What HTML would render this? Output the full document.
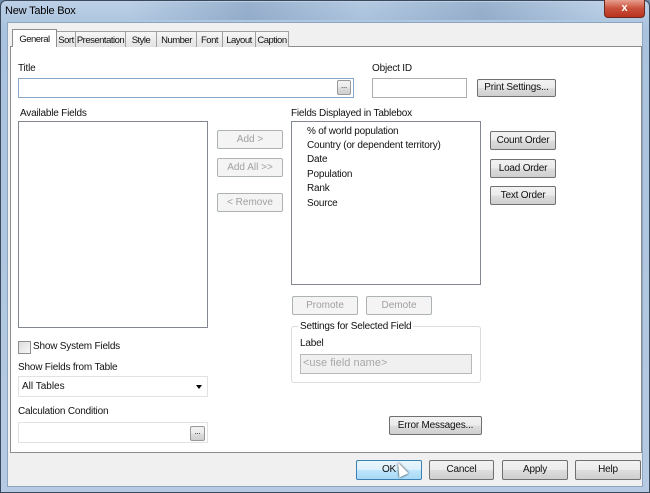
<!DOCTYPE html><html><head><style>
*{box-sizing:border-box;margin:0;padding:0}
body{width:650px;height:493px;overflow:hidden;background:#6f8aa8;font-family:"Liberation Sans",sans-serif;font-size:10px;color:#111;position:relative}
div,span{position:absolute}
.t{white-space:nowrap;letter-spacing:-0.2px}
.in{background:#fff;border:1px solid #abadb3}
.b{border:1px solid #707070;border-radius:2px;background:linear-gradient(#f2f2f2,#ebebeb 50%,#dddddd 51%,#cfcfcf);text-align:center;white-space:nowrap;letter-spacing:-0.2px}
.d{border:1px solid #adb2b5;border-radius:2px;background:#f4f4f4;color:#a0a0a0;text-align:center;white-space:nowrap}
.tab{top:31px;height:16px;border:1px solid #a0a0a0;border-bottom:none;background:linear-gradient(#f6f6f6,#e3e3e3);padding:3px 0 0 0;text-align:center;white-space:nowrap;letter-spacing:-0.5px;font-size:9.5px;overflow:hidden}
</style></head><body>
<div style="left:0;top:0;width:650px;height:493px;background:linear-gradient(#bcd0e6,#a9c2dd 30px,#b6cbe3);border:1px solid #3a4a5c;border-radius:6px 6px 0 0"></div>
<div style="left:130px;top:2px;width:470px;height:18px;background:linear-gradient(90deg,rgba(120,150,190,.0),rgba(90,120,160,.35),rgba(120,150,190,.1),rgba(80,110,150,.3),rgba(120,150,190,.0))"></div>
<div class="t" style="left:5px;top:5px;font-size:11px;color:#000">New Table Box</div>
<div style="left:604px;top:0;width:41px;height:18px;background:linear-gradient(#e8a090,#c9503a 50%,#b8321e);border:1px solid #6b2a20;border-top:none;border-radius:0 0 4px 4px;color:#fff;text-align:center;font-weight:bold;font-size:11px;line-height:16px">x</div>
<div style="left:7px;top:22px;width:636px;height:465px;background:#f0f0f0;border:1px solid #8ea5c0"></div>
<div style="left:10px;top:46px;width:632px;height:407px;background:#fff;border:1px solid #8d8d8d"></div>
<div class="tab" style="left:12px;top:29px;width:45px;height:18px;background:#fff;z-index:2;border-color:#8d8d8d;padding-top:4px">General</div>
<div class="tab" style="left:57px;width:19px;border-left:none">Sort</div>
<div class="tab" style="left:75px;width:51px">Presentation</div>
<div class="tab" style="left:126px;width:31px;border-left:none">Style</div>
<div class="tab" style="left:157px;width:40px;border-left:none">Number</div>
<div class="tab" style="left:197px;width:26px;border-left:none">Font</div>
<div class="tab" style="left:223px;width:33px;border-left:none">Layout</div>
<div class="tab" style="left:255px;width:34px">Caption</div>

<div class="t" style="left:18px;top:63px">Title</div>
<div class="in" style="left:18px;top:78px;width:336px;height:20px;border-color:#8aa7c9"></div>
<div class="b" style="left:337px;top:80px;width:14px;height:15px;font-size:8px;line-height:10px;border-color:#999">...</div>
<div class="t" style="left:372px;top:63px">Object ID</div>
<div class="in" style="left:372px;top:78px;width:95px;height:20px"></div>
<div class="b" style="left:477px;top:79px;width:79px;height:18px;line-height:16px">Print Settings...</div>

<div class="t" style="left:20px;top:108px">Available Fields</div>
<div class="in" style="left:18px;top:121px;width:190px;height:207px;border-color:#828790"></div>
<div class="d" style="left:217px;top:130px;width:66px;height:19px;line-height:17px">Add &gt;</div>
<div class="d" style="left:217px;top:158px;width:66px;height:19px;line-height:17px">Add All &gt;&gt;</div>
<div class="d" style="left:217px;top:193px;width:66px;height:19px;line-height:17px">&lt; Remove</div>

<div class="t" style="left:291px;top:108px">Fields Displayed in Tablebox</div>
<div class="in" style="left:291px;top:121px;width:190px;height:164px;border-color:#828790"></div>
<div class="t" style="left:307px;top:126px">% of world population</div>
<div class="t" style="left:307px;top:140px">Country (or dependent territory)</div>
<div class="t" style="left:307px;top:154px">Date</div>
<div class="t" style="left:307px;top:169px">Population</div>
<div class="t" style="left:307px;top:183px">Rank</div>
<div class="t" style="left:307px;top:198px">Source</div>
<div class="b" style="left:490px;top:131px;width:66px;height:19px;line-height:17px">Count Order</div>
<div class="b" style="left:490px;top:159px;width:66px;height:19px;line-height:17px">Load Order</div>
<div class="b" style="left:490px;top:186px;width:66px;height:19px;line-height:17px">Text Order</div>

<div class="d" style="left:292px;top:296px;width:66px;height:19px;line-height:17px">Promote</div>
<div class="d" style="left:366px;top:296px;width:66px;height:19px;line-height:17px">Demote</div>
<div style="left:291px;top:326px;width:190px;height:57px;border:1px solid #dcdcdc;border-radius:3px"></div>
<div class="t" style="left:298px;top:321px;background:#fff;padding:0 2px">Settings for Selected Field</div>
<div class="t" style="left:300px;top:338px">Label</div>
<div class="in" style="left:300px;top:354px;width:172px;height:20px;background:#f0f0f0;border-color:#b8b8b8;color:#a8a8a8;padding:2px 0 0 2px;font-size:11px">&lt;use field name&gt;</div>

<div style="left:18px;top:341px;width:13px;height:13px;border:1px solid #8f8f8f;background:linear-gradient(135deg,#dcdcdc,#f8f8f8)"></div>
<div class="t" style="left:33px;top:341px">Show System Fields</div>
<div class="t" style="left:18px;top:362px">Show Fields from Table</div>
<div class="in" style="left:18px;top:376px;width:190px;height:21px;border-color:#e2e2e2;padding:4px 0 0 3px">All Tables</div>
<div style="left:196px;top:385px;width:0;height:0;border-left:3px solid transparent;border-right:3px solid transparent;border-top:4px solid #000"></div>
<div class="t" style="left:18px;top:406px">Calculation Condition</div>
<div class="in" style="left:18px;top:422px;width:190px;height:21px;border-color:#e2e2e2"></div>
<div class="b" style="left:190px;top:426px;width:15px;height:15px;font-size:8px;line-height:10px;border-color:#999">...</div>

<div class="b" style="left:389px;top:416px;width:93px;height:19px;line-height:17px">Error Messages...</div>

<div class="b" style="left:356px;top:460px;width:66px;height:20px;line-height:18px;border-color:#3c7fb1;background:linear-gradient(#eaf6fd,#d9f0fc 50%,#bee6fd 51%,#a7d9f5)">OK</div>
<div style="left:396px;top:462px;width:0;height:0;border-left:5px solid transparent;border-right:5px solid transparent;border-bottom:14px solid #fff;transform:rotate(-25deg);filter:drop-shadow(0 0 1px #000)"></div>
<div class="b" style="left:429px;top:460px;width:65px;height:20px;line-height:18px">Cancel</div>
<div class="b" style="left:502px;top:460px;width:66px;height:20px;line-height:18px">Apply</div>
<div class="b" style="left:575px;top:460px;width:66px;height:20px;line-height:18px">Help</div>
</body></html>
